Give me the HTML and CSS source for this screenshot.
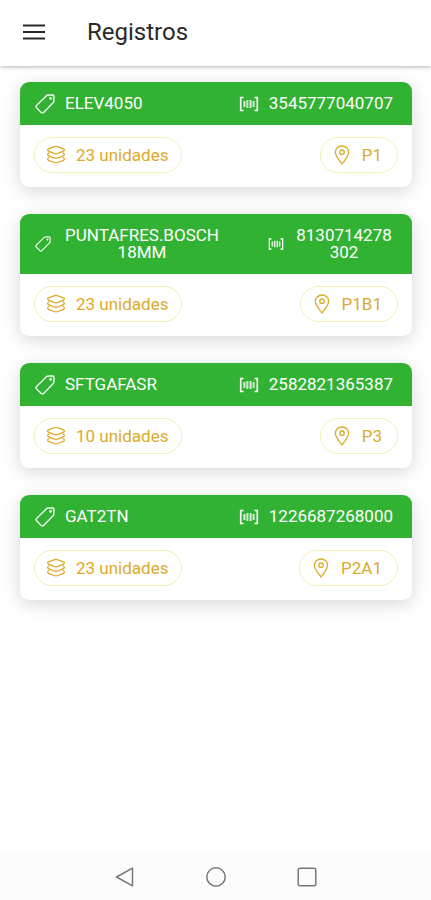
FILE: index.html
```html
<!DOCTYPE html>
<html lang="es">
<head>
    <meta charset="UTF-8">
    <meta name="viewport" content="width=device-width, initial-scale=1.0">
    <title>Registros</title>
    <link rel="stylesheet" href="styles.css">
</head>
<body>
    <!-- Shared icons -->
    <svg class="sprite" aria-hidden="true">
        <symbol id="icon-tag" viewBox="0 0 20 20">
            <path d="M12 1.2 L17.6 1 Q19 1 19 2.4 L18.8 8 L8.6 18.4 Q7.4 19.4 6.2 18.4 L1.4 13.6 Q.6 12.6 1.4 11.6 Z"/>
            <circle cx="15.6" cy="4.4" r=".7"/>
        </symbol>
        <symbol id="icon-barcode" viewBox="0 0 20 20">
            <path d="M4.5 3.5 H1.7 V16.5 H4.5 M15.5 3.5 H18.3 V16.5 H15.5" stroke-width="1.6"/>
            <path d="M5.4 7 V13 M8.4 6 V14 M11.6 6 V14 M14.6 7 V13" stroke-width="2" opacity=".8"/>
        </symbol>
        <symbol id="icon-layers" viewBox="0 0 20 20">
            <path d="M10 1.4 Q11 1.4 12 1.8 L17.4 3.8 Q19.4 5 17.4 6.2 L12 8.3 Q10 9 8 8.3 L2.6 6.2 Q.6 5 2.6 3.8 L8 1.8 Q9 1.4 10 1.4 Z"/>
            <path d="M3.4 7.6 L2.4 8.2 Q.8 9.6 2.6 10.7 L8 12.9 Q10 13.6 12 12.9 L17.4 10.7 Q19.2 9.6 17.6 8.2 L16.6 7.6"/>
            <path d="M3.4 12.2 L2.4 12.8 Q.8 14.2 2.6 15.3 L8 17.5 Q10 18.2 12 17.5 L17.4 15.3 Q19.2 14.2 17.6 12.8 L16.6 12.2"/>
        </symbol>
        <symbol id="icon-pin" viewBox="0 0 20 20">
            <path d="M10 19 C7.2 15 3.4 11 3.4 7.4 C3.4 3.6 6.4 1 10 1 C13.6 1 16.6 3.6 16.6 7.4 C16.6 11 12.8 15 10 19 Z"/>
            <circle cx="10" cy="7.2" r="2.2"/>
        </symbol>
    </svg>

    <header class="toolbar">
        <button type="button" class="menu-button" aria-label="Menú">
            <svg viewBox="0 0 22 16"><path d="M0 1.5 H22 M0 8 H22 M0 14.5 H22"/></svg>
        </button>
        <h1>Registros</h1>
    </header>

    <main class="list">
        <article class="card">
            <div class="card-head">
                <div class="field">
                    <svg class="icon"><use href="#icon-tag"/></svg>
                    <span>ELEV4050</span>
                </div>
                <div class="field code">
                    <svg class="icon"><use href="#icon-barcode"/></svg>
                    <span>3545777040707</span>
                </div>
            </div>
            <div class="card-body">
                <div class="chip units">
                    <svg class="icon"><use href="#icon-layers"/></svg>
                    <span>23 unidades</span>
                </div>
                <div class="chip">
                    <svg class="icon"><use href="#icon-pin"/></svg>
                    <span>P1</span>
                </div>
            </div>
        </article>

        <article class="card">
            <div class="card-head compact">
                <div class="field">
                    <svg class="icon"><use href="#icon-tag"/></svg>
                    <span>PUNTAFRES.BOSCH 18MM</span>
                </div>
                <div class="field code">
                    <svg class="icon"><use href="#icon-barcode"/></svg>
                    <span>8130714278302</span>
                </div>
            </div>
            <div class="card-body">
                <div class="chip units">
                    <svg class="icon"><use href="#icon-layers"/></svg>
                    <span>23 unidades</span>
                </div>
                <div class="chip">
                    <svg class="icon"><use href="#icon-pin"/></svg>
                    <span>P1B1</span>
                </div>
            </div>
        </article>

        <article class="card">
            <div class="card-head">
                <div class="field">
                    <svg class="icon"><use href="#icon-tag"/></svg>
                    <span>SFTGAFASR</span>
                </div>
                <div class="field code">
                    <svg class="icon"><use href="#icon-barcode"/></svg>
                    <span>2582821365387</span>
                </div>
            </div>
            <div class="card-body">
                <div class="chip units">
                    <svg class="icon"><use href="#icon-layers"/></svg>
                    <span>10 unidades</span>
                </div>
                <div class="chip">
                    <svg class="icon"><use href="#icon-pin"/></svg>
                    <span>P3</span>
                </div>
            </div>
        </article>

        <article class="card">
            <div class="card-head">
                <div class="field">
                    <svg class="icon"><use href="#icon-tag"/></svg>
                    <span>GAT2TN</span>
                </div>
                <div class="field code">
                    <svg class="icon"><use href="#icon-barcode"/></svg>
                    <span>1226687268000</span>
                </div>
            </div>
            <div class="card-body">
                <div class="chip units">
                    <svg class="icon"><use href="#icon-layers"/></svg>
                    <span>23 unidades</span>
                </div>
                <div class="chip">
                    <svg class="icon"><use href="#icon-pin"/></svg>
                    <span>P2A1</span>
                </div>
            </div>
        </article>
    </main>

    <nav class="system-bar">
        <button type="button" aria-label="Atrás">
            <svg viewBox="0 0 20 20"><path d="M17.5 1.2 V18.8 L1.5 10 Z"/></svg>
        </button>
        <button type="button" aria-label="Inicio">
            <svg viewBox="0 0 20 20"><circle cx="10" cy="10" r="9.2"/></svg>
        </button>
        <button type="button" aria-label="Recientes">
            <svg viewBox="0 0 20 20"><rect x="1.2" y="1.2" width="17.6" height="17.6" rx="2"/></svg>
        </button>
    </nav>
</body>
</html>
```
FILE: styles.css
```css
* {
    box-sizing: border-box;
    margin: 0;
    padding: 0;
}

body {
    display: flex;
    flex-direction: column;
    min-height: 100vh;
    background-color: #fff;
    color: #2a2a2a;
    font-family: Roboto, sans-serif;
    font-size: 17px;
    line-height: 17px;
}

button {
    border: none;
    background: none;
    color: inherit;
    cursor: pointer;
}

svg {
    display: block;
    fill: none;
    stroke: currentColor;
}

.sprite {
    display: none;
}

.toolbar {
    display: flex;
    align-items: center;
    gap: 42px;
    height: 66px;
    padding: 0 23px 2px;
    box-shadow: 0 1px 4px rgba(0, 0, 0, 0.3);
}

.toolbar h1 {
    font-size: 24px;
    line-height: 28px;
    font-weight: 400;
}

.menu-button svg {
    width: 22px;
    height: 16px;
    stroke-width: 2;
}

.list {
    flex: 1;
    display: flex;
    flex-direction: column;
    gap: 27px;
    padding: 16px 19px 27px 20px;
}

.card {
    border-radius: 9px;
    overflow: hidden;
    background-color: #fff;
    box-shadow: 0 4px 18px rgba(0, 0, 0, 0.16);
}

.card-head,
.card-body {
    display: flex;
    align-items: center;
    justify-content: space-between;
}

.card-head {
    padding: 13px 19px 13px 15px;
    background-color: #32b232;
    color: #fff;
}

.card-body {
    padding: 12px 14px 14px;
}

.field {
    display: flex;
    align-items: center;
    gap: 10px;
    text-align: center;
}

.icon {
    flex: none;
    width: 20px;
    height: 20px;
    margin: -2px 0;
    stroke-width: 1.3;
}

.compact .icon {
    width: 16px;
    height: 16px;
}

.compact .field {
    gap: 14px;
}

.compact .field span {
    max-width: 154px;
}

.compact .code {
    gap: 11px;
}

.compact .code span {
    max-width: 98px;
    overflow-wrap: anywhere;
}

.chip {
    display: flex;
    align-items: center;
    gap: 10px;
    height: 36px;
    padding: 0 15px 0 11px;
    border: 1px solid #f5efb8;
    border-radius: 18px;
    color: #dbab2b;
}

.units {
    padding-right: 13px;
}

.system-bar {
    display: flex;
    align-items: center;
    justify-content: center;
    gap: 71px;
    height: 47px;
    background-color: #fcfcfc;
    color: #777;
}

.system-bar svg {
    width: 20px;
    height: 20px;
    stroke-width: 1.5;
    stroke-linejoin: round;
}
```
